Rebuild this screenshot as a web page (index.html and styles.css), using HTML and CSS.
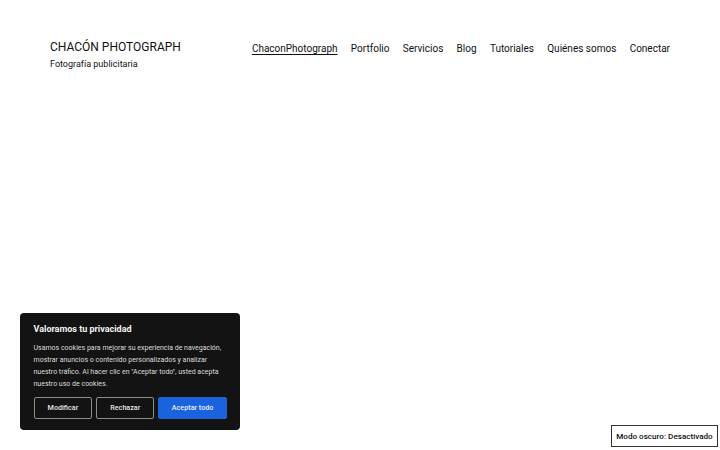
FILE: index.html
```html
<!DOCTYPE html>
<html lang="es">
<head>
<meta charset="utf-8">
<title>Chacón Photograph</title>
<link rel="stylesheet" href="styles.css">
</head>
<body>
<header class="site-header">
  <div class="branding">
    <div class="site-title">CHACÓN PHOTOGRAPH</div>
    <div class="site-tagline">Fotografía publicitaria</div>
  </div>
  <nav class="main-nav">
    <a class="nav-link active" href="#">ChaconPhotograph</a>
    <a class="nav-link" href="#">Portfolio</a>
    <a class="nav-link" href="#">Servicios</a>
    <a class="nav-link" href="#">Blog</a>
    <a class="nav-link" href="#">Tutoriales</a>
    <a class="nav-link" href="#">Quiénes somos</a>
    <a class="nav-link" href="#">Conectar</a>
  </nav>
</header>

<div class="cookie-banner">
  <div class="cookie-title">Valoramos tu privacidad</div>
  <p class="cookie-text">Usamos cookies para mejorar su experiencia de navegación, mostrar anuncios o contenido personalizados y analizar nuestro tráfico. Al hacer clic en "Aceptar todo", usted acepta nuestro uso de cookies.</p>
  <div class="cookie-actions">
    <button class="cookie-btn outline btn-modify">Modificar</button>
    <button class="cookie-btn outline btn-reject">Rechazar</button>
    <button class="cookie-btn primary">Aceptar todo</button>
  </div>
</div>

<button class="dark-toggle">Modo oscuro: Desactivado</button>
</body>
</html>
```

FILE: styles.css
```css
* { box-sizing: border-box; }

html, body {
  margin: 0;
  padding: 0;
  background: #fff;
  color: #111;
  font-family: Roboto, "Liberation Sans", sans-serif;
}

body {
  width: 720px;
  height: 450px;
  overflow: hidden;
  position: relative;
}

/* Header */
.site-header {
  display: flex;
  justify-content: space-between;
  align-items: flex-start;
  padding: 38px 50px 0 50px;
}

.site-title {
  font-size: 12px;
  line-height: 18px;
  color: #111;
}

.site-tagline {
  font-size: 9px;
  line-height: 12px;
  margin-top: 2px;
  color: #111;
}

.main-nav {
  display: flex;
  gap: 13.3px;
  padding-top: 3px;
}

.nav-link {
  font-size: 10px;
  line-height: 16px;
  color: #111;
  text-decoration: none;
}

.nav-link.active {
  text-decoration: underline;
  text-underline-offset: 2px;
  text-decoration-thickness: 1px;
}

/* Cookie consent banner */
.cookie-banner {
  position: absolute;
  left: 20px;
  top: 313px;
  width: 220px;
  height: 117px;
  background: #131313;
  border-radius: 4px;
  padding: 10px 13px 0 13.5px;
  color: #e8e8e8;
}

.cookie-title {
  font-size: 9px;
  font-weight: 700;
  line-height: 13px;
  color: #f2f2f2;
}

.cookie-text {
  margin: 7px 0 0 0;
  font-size: 7px;
  line-height: 11.9px;
  color: #dcdcdc;
}

.cookie-actions {
  display: flex;
  gap: 4px;
  margin-top: 6px;
}

.cookie-btn {
  height: 22px;
  font-family: Roboto, "Liberation Sans", sans-serif;
  font-size: 7.2px;
  font-weight: 500;
  border-radius: 2px;
  padding: 0;
  cursor: pointer;
}

.cookie-btn.outline {
  background: transparent;
  color: #e6e6e6;
  border: 1.5px solid #8c8c8c;
}

.btn-modify { width: 59px; }
.btn-reject { width: 58px; }

.cookie-btn.primary {
  width: 69px;
  background: #1b63de;
  color: #e8eefc;
  border: 1px solid #1b63de;
}

/* Dark mode toggle */
.dark-toggle {
  position: absolute;
  left: 611px;
  top: 425px;
  width: 107px;
  height: 22px;
  background: #fff;
  border: 1px solid #333;
  font-family: Roboto, "Liberation Sans", sans-serif;
  font-size: 8.1px;
  font-weight: 500;
  color: #111;
  padding: 0;
  cursor: pointer;
}
```
